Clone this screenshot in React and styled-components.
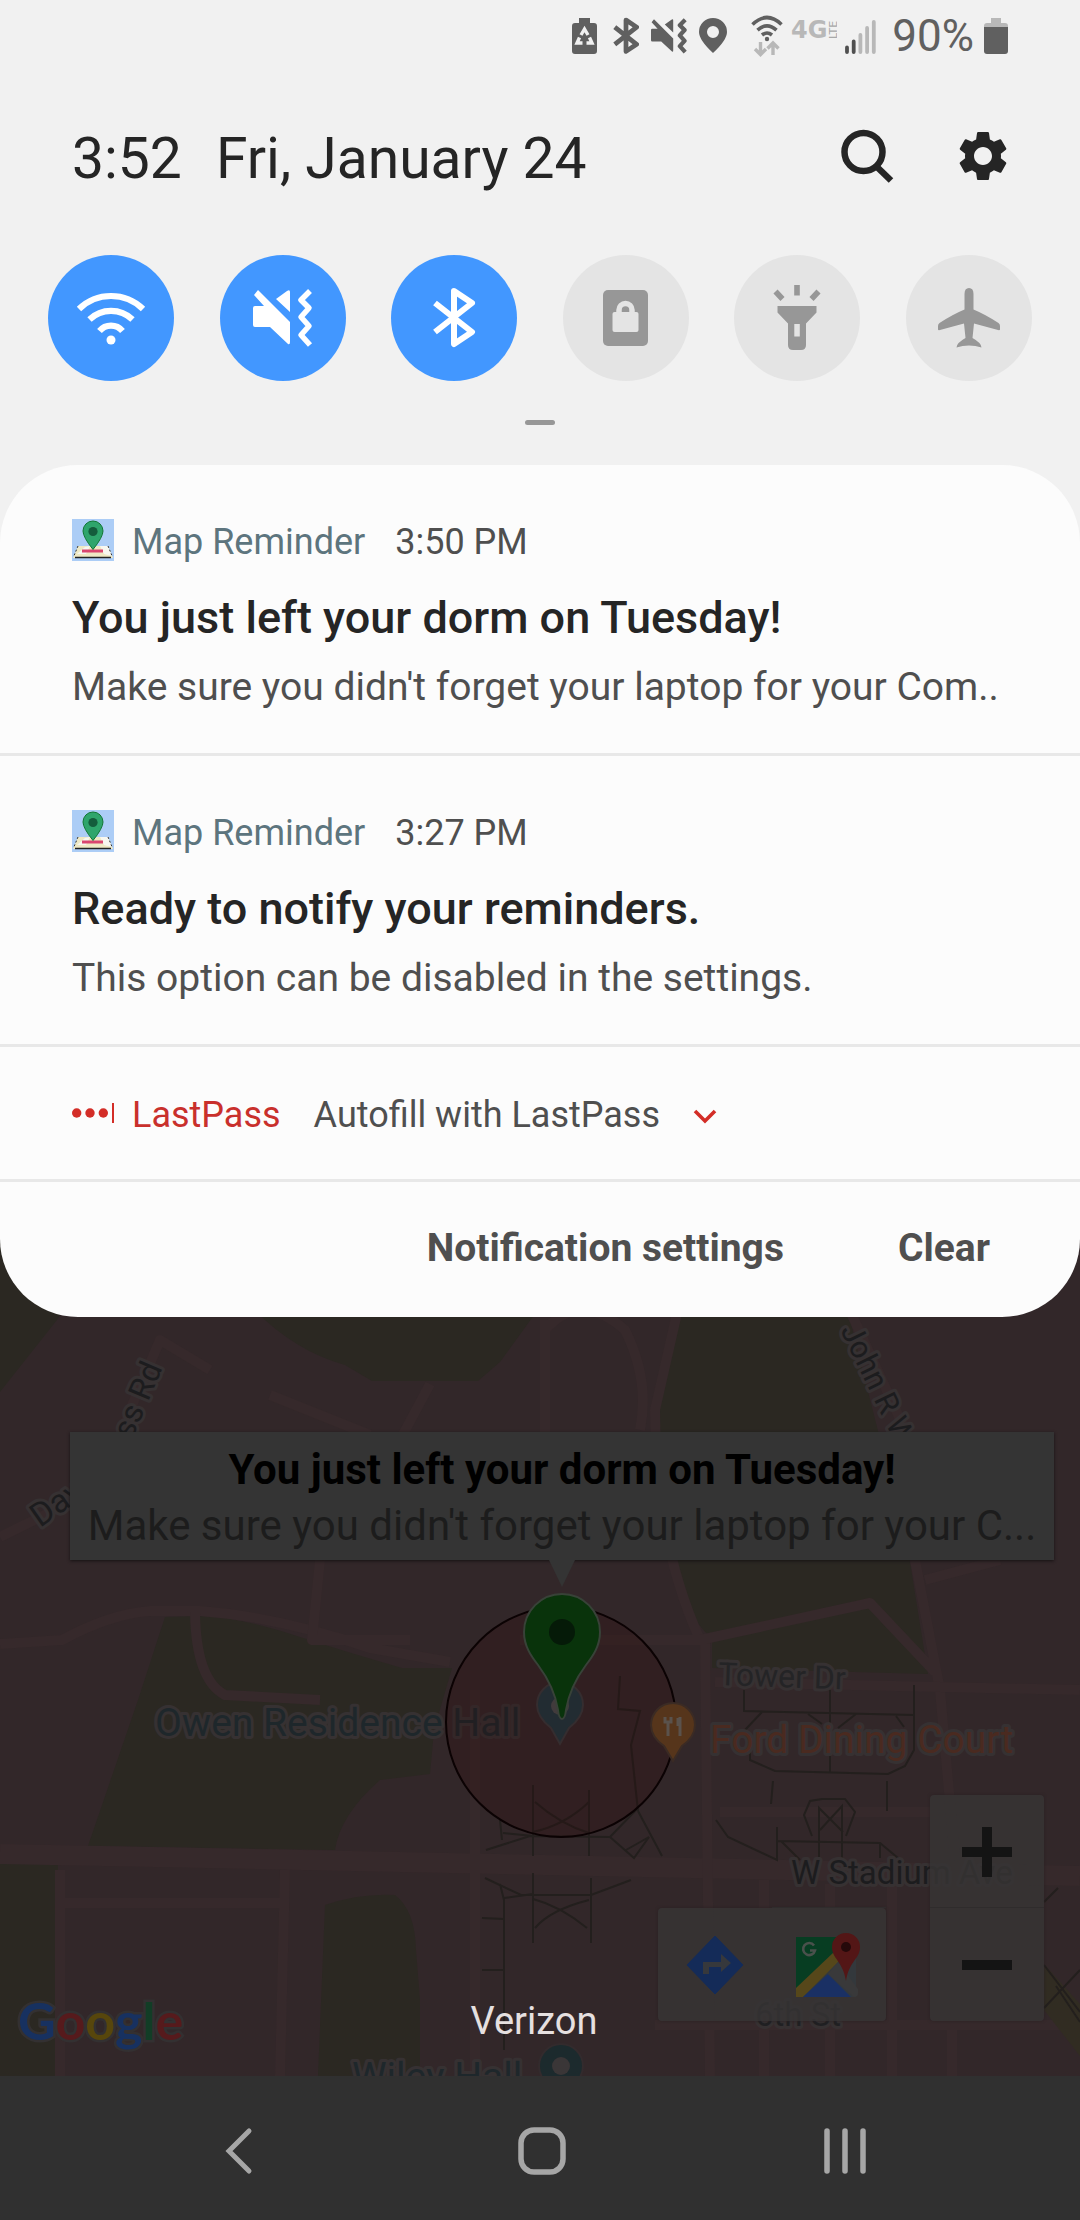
import React from "react";
import styled, { createGlobalStyle } from "styled-components";
import { MdSettings } from "react-icons/md";

const GlobalStyle = createGlobalStyle`
  *, *::before, *::after { box-sizing: border-box; }
  body { margin: 0; background: #303030; }
  h1, h2, p, time { margin: 0; }
  svg { display: block; flex: none; }
`;

const Screen = styled.div`
  display: flex;
  flex-direction: column;
  min-height: 100vh;
  font-family: Roboto, "Noto Sans", sans-serif;
  color: #252525;
`;

const PlainButton = styled.button`
  display: flex;
  align-items: center;
  justify-content: center;
  padding: 0;
  border: 0;
  background: none;
  color: inherit;
  font: inherit;
  cursor: pointer;
`;

/* ---------- quick panel ---------- */

const QuickPanel = styled.header`
  padding-bottom: 120px;
  background: #f1f1f1;
`;

const StatusBar = styled.div`
  display: flex;
  justify-content: flex-end;
  align-items: center;
  gap: 16px;
  height: 72px;
  padding: 0 72px;
  color: #606060;
  font-size: 44px;
  line-height: 48px;
`;

const StatusGroup = styled.div`
  display: flex;
  align-items: center;
  gap: ${(p) => p.$gap}px;
`;

const AlertIcons = styled(StatusGroup)`
  padding-right: 8px;
`;

const ClockRow = styled.div`
  display: flex;
  align-items: center;
  justify-content: space-between;
  height: 168px;
  padding: 0 72px;
`;

const Clock = styled.h1`
  display: flex;
  gap: 34px;
  padding-top: 6px;
  font-size: 57px;
  line-height: 68px;
  font-weight: 400;
  white-space: nowrap;
`;

const ClockActions = styled.div`
  display: flex;
  align-items: center;
  gap: 63px;
`;

const GearIcon = styled(MdSettings)`
  width: 50px;
  height: 60px;
`;

const Toggles = styled.div`
  display: flex;
  justify-content: space-between;
  padding: 15px 48px 0;
`;

const Toggle = styled(PlainButton)`
  width: 126px;
  height: 126px;
  border-radius: 50%;
  background: ${(p) => (p.$on ? "#4297ff" : "#e4e4e4")};
  color: ${(p) => (p.$on ? "#ffffff" : "#979797")};
`;

const Handle = styled.div`
  width: 30px;
  height: 5px;
  margin: 39px auto 0;
  border-radius: 3px;
  background: #979797;
`;

/* ---------- notifications ---------- */

const Panel = styled.main`
  position: relative;
  z-index: 2;
  margin-top: -80px;
  border-radius: 78px;
  background: #fcfcfc;
  overflow: hidden;
`;

const Card = styled.article`
  padding: 54px 72px 42px;
  border-bottom: 3px solid #e8e8e8;
`;

const CardHead = styled.div`
  display: flex;
  align-items: center;
  gap: ${(p) => (p.$compact ? 33 : 30)}px;
  font-size: 36px;
  line-height: 46px;
  color: #4f4f4f;
`;

const AppName = styled.span`
  display: flex;
  align-items: flex-start;
  gap: 18px;
  color: ${(p) => p.$color};
`;

const CardTitle = styled.h2`
  margin-top: 26px;
  font-size: 45px;
  line-height: 54px;
  font-weight: 500;
`;

const CardBody = styled.p`
  margin-top: 18px;
  font-size: 39px;
  line-height: 48px;
  color: #4f4f4f;
  white-space: nowrap;
`;

const CompactCard = styled(Card)`
  padding: 45px 72px 41px;
`;

const PanelFooter = styled.footer`
  display: flex;
  align-items: center;
  justify-content: flex-end;
  gap: 114px;
  height: 135px;
  padding: 0 90px 4px;
`;

const FooterButton = styled(PlainButton)`
  font-size: 39px;
  line-height: 48px;
  font-weight: 700;
  color: #4f4f4f;
`;

/* ---------- map ---------- */

const MapArea = styled.section`
  position: relative;
  z-index: 1;
  flex: 1 0 847px;
  margin-top: -88px;
  background: #322729;
  overflow: hidden;
`;

const MapCanvas = styled.svg`
  position: absolute;
  inset: 0;
  width: 100%;
  height: 100%;
`;

const InfoWindow = styled.div`
  position: absolute;
  top: 203px;
  left: 70px;
  right: 26px;
  padding: 12px 0 4px;
  background: #343434;
  box-shadow: 0 1px 3px #161213;
  text-align: center;
  color: #1c1c1c;
  white-space: nowrap;

  &::after {
    content: "";
    position: absolute;
    top: 100%;
    left: 50%;
    margin-left: -13px;
    border: 13px solid transparent;
    border-top: 27px solid #343434;
    border-bottom: 0;
  }
`;

const InfoTitle = styled.h2`
  font-size: 42px;
  line-height: 52px;
  font-weight: 700;
  color: #000000;
`;

const InfoText = styled.p`
  font-size: 42px;
  line-height: 60px;
`;

const MapControls = styled.div`
  position: absolute;
  right: 36px;
  bottom: 55px;
  display: flex;
  align-items: flex-end;
  gap: 44px;
`;

const ControlGroup = styled.div`
  display: flex;
  flex-direction: ${(p) => (p.$column ? "column" : "row")};
  border-radius: 4px;
  background: rgba(55, 53, 53, 0.82);
  box-shadow: 0 0 3px #2a2122;
`;

const ControlButton = styled(PlainButton)`
  width: 114px;
  height: 113px;

  & + & {
    box-shadow: ${(p) => (p.$column ? "0 -1px 0 #2f2c2c" : "-1px 0 0 #2f2c2c")};
  }
`;

const Carrier = styled.p`
  position: absolute;
  bottom: 31px;
  left: 0;
  right: 12px;
  text-align: center;
  font-size: 38px;
  line-height: 48px;
  color: #e6e0e0;
`;

/* ---------- navigation bar ---------- */

const NavBar = styled.nav`
  position: relative;
  z-index: 2;
  display: grid;
  grid-template-columns: repeat(3, 1fr);
  height: 144px;
  padding: 6px 84px 0 88px;
  background: #303030;
  color: #a6a6a6;
`;

/* ---------- icons ---------- */

const PowerSavingIcon = () => (
  <svg width="29" height="38" viewBox="0 0 29 38" aria-hidden="true">
    <path fill="#606060" d="M7 1h11v5h4q3 0 3 3v25q0 3-3 3H3q-3 0-3-3V9q0-3 3-3h4z" />
    <g fill="none" stroke="#f1f1f1" strokeWidth="3.400">
      <path d="M9 18l3.500-6 3.500 6M7.500 20.500L5 26h5.500M17.500 20.500L20 26h-5.500" />
    </g>
  </svg>
);

const BluetoothIcon = ({ w, h, stroke }) => (
  <svg width={w} height={h} viewBox="0 0 44 62" aria-hidden="true">
    <path
      d="M3 16L40 45L22 57V4L40 16L3 45"
      fill="none"
      stroke="currentColor"
      strokeWidth={stroke}
      strokeLinejoin="round"
    />
  </svg>
);

const MuteIcon = ({ w, h, stroke }) => (
  <svg width={w} height={h} viewBox="0 0 60 60" aria-hidden="true">
    <path
      fill="currentColor"
      d="M2 18h9L1 7l4-5 32 32v20q0 3-2 2L17 39H2q-2 0-2-2V20q0-2 2-2zM23 11l11-8q3-2 3 1v20z"
    />
    <path
      fill="none"
      stroke="currentColor"
      strokeWidth={stroke}
      strokeLinejoin="round"
      d="M57 3l-9 9 8 8-8 9 8 9-8 9 9 10"
    />
  </svg>
);

const LocationIcon = () => (
  <svg width="28" height="36" viewBox="0 0 28 36" aria-hidden="true">
    <path
      fill="#606060"
      fillRule="evenodd"
      d="M14 0a14 14 0 0 1 14 14q0 8-14 21Q0 22 0 14A14 14 0 0 1 14 0zm0 8a6 6 0 1 0 0 12 6 6 0 0 0 0-12z"
    />
  </svg>
);

const WifiStatusIcon = () => (
  <svg width="32" height="42" viewBox="0 0 32 42" aria-hidden="true">
    <g fill="none" stroke="#606060" strokeWidth="3.600">
      <path d="M1.500 9.500Q16-4.500 30.500 9.500M6.500 15.200Q16 6.500 25.500 15.200M11 20Q16 16 21 20" />
    </g>
    <circle cx="16" cy="24" r="2.200" fill="#606060" />
    <g fill="none" stroke="#b8b8b8" strokeWidth="3.400">
      <path d="M9.500 27v12M4 34l5.500 5.500L15 34M22 40V28M16.500 33.500L22 28l5.500 5.500" />
    </g>
  </svg>
);

const NetworkIcon = () => (
  <svg width="46" height="36" viewBox="0 0 46 36" role="img" aria-label="4G LTE">
    <text x="0" y="20" fontFamily="DejaVu Sans, sans-serif" fontWeight="700" fontSize="24" fill="#b8b8b8">
      4G
    </text>
    <text
      transform="translate(46 21) rotate(-90)"
      fontFamily="DejaVu Sans, sans-serif"
      fontSize="11"
      fill="#a8a8a8"
    >
      LTE
    </text>
  </svg>
);

const SignalIcon = () => (
  <svg width="31" height="35" viewBox="0 0 31 35" aria-hidden="true">
    <g strokeWidth="3.800" strokeLinecap="round">
      <path stroke="#505050" d="M2 28.500V33M8.700 22.500V33" />
      <path stroke="#b8b8b8" d="M15.400 16V33M22.100 9V33M28.800 3V33" />
    </g>
  </svg>
);

const BatteryIcon = () => (
  <svg width="24" height="38" viewBox="0 0 24 38" aria-hidden="true">
    <path fill="#b8b8b8" d="M7 1h10v5h4q3 0 3 3v1H0V9q0-3 3-3h4z" />
    <path fill="#606060" d="M0 10h24v24q0 3-3 3H3q-3 0-3-3z" />
  </svg>
);

const SearchIcon = () => (
  <svg width="54" height="54" viewBox="0 0 54 54" aria-hidden="true">
    <g fill="none" stroke="#252525">
      <circle cx="22.500" cy="23" r="19" strokeWidth="6.500" />
      <path d="M35 37L50 51.500" strokeWidth="6.500" />
    </g>
  </svg>
);

const WifiIcon = () => (
  <svg width="70" height="60" viewBox="0 0 70 60" aria-hidden="true">
    <g fill="none" stroke="currentColor" strokeWidth="6.200">
      <path d="M3 21A45.900 45.900 0 0 1 67 21M13.500 31.500A31 31 0 0 1 56.500 31.500M23.500 43A15 15 0 0 1 46.500 43" />
    </g>
    <circle cx="35" cy="52" r="4.500" fill="currentColor" />
  </svg>
);

const LockIcon = () => (
  <svg width="45" height="56" viewBox="0 0 45 56" aria-hidden="true">
    <rect width="45" height="56" rx="5" fill="currentColor" />
    <rect x="9.500" y="22" width="26" height="20" rx="2" fill="#e4e4e4" />
    <path d="M16 23v-3a6.500 6.500 0 0 1 13 0v3" fill="none" stroke="#e4e4e4" strokeWidth="5.500" />
  </svg>
);

const FlashlightIcon = () => (
  <svg width="48" height="66" viewBox="0 0 48 66" aria-hidden="true">
    <path
      fill="currentColor"
      fillRule="evenodd"
      d="M4.500 21h39v6.500l-10.500 11V60q0 5-5 5h-8q-5 0-5-5V38.500L4.500 27.500zM21.300 39v12.500h5.500V39z"
    />
    <path d="M24 0v10.500M2.500 6.500l7 7.500M45.500 6.500l-7 7.500" stroke="currentColor" strokeWidth="5.600" />
  </svg>
);

const AirplaneIcon = () => (
  <svg width="62" height="60" viewBox="0 0 62 60" aria-hidden="true">
    <path
      fill="currentColor"
      d="M31 0q4.500 0 4.500 6v15.500q12 5 25 13.500 1.500 1 1.500 3v3.500q0 1-2 .6L36 35.500l-1.500 14.500Q43.500 55 43.500 59.500q-6-2-12.500-2-6.500 0-12.500 2Q18.500 55 27.500 50L26 35.500 2 42.100q-2 .4-2-.6V38q0-2 1.500-3 13-8.500 25-13.500V6Q26.500 0 31 0z"
    />
  </svg>
);

const MapReminderIcon = () => (
  <svg width="42" height="42" viewBox="0 0 42 42" aria-hidden="true">
    <rect width="42" height="42" fill="#accdf6" />
    <path d="M6 27h30l5 12H1z" fill="#efe9c4" />
    <path d="M5 35l8-7 5-1-4 8zM28 27h8l4 10-8-2z" fill="#f7f7f0" />
    <path d="M3 38.500h36" stroke="#222" strokeWidth="1.500" />
    <path d="M6 27L1.500 38M36 27l4.500 11" stroke="#333" strokeWidth="1" strokeDasharray="2 2" />
    <path d="M10 32h21" stroke="#d9466f" strokeWidth="3" />
    <path
      d="M21 2a10 10 0 0 1 10 10q0 6-10 18.500Q11 18 11 12A10 10 0 0 1 21 2z"
      fill="#2fa56c"
      stroke="#173"
      strokeWidth="1"
    />
    <circle cx="21" cy="12.500" r="4.600" fill="#145c3c" />
  </svg>
);

const LastPassIcon = () => (
  <svg width="42" height="42" viewBox="0 0 42 42" aria-hidden="true">
    <g fill="#d32d27">
      <circle cx="4.700" cy="21" r="4.700" />
      <circle cx="18" cy="21" r="4.700" />
      <circle cx="31.300" cy="21" r="4.700" />
      <rect x="40" y="11" width="2" height="20" />
    </g>
  </svg>
);

const ChevronIcon = () => (
  <svg width="24" height="18" viewBox="0 -3 24 18" aria-hidden="true">
    <path d="M2 2l10 10L22 2" fill="none" stroke="#d32d27" strokeWidth="3.600" />
  </svg>
);

const DirectionsIcon = () => (
  <svg width="58" height="60" viewBox="0 0 58 60" aria-hidden="true">
    <path d="M29 1L57 30 29 59 1 30z" fill="#142b58" stroke="#142b58" strokeLinejoin="round" />
    <path d="M17 39V27h18v-8l10 9-10 9v-5H23v7z" fill="#36383c" />
  </svg>
);

const GoogleMapsIcon = () => (
  <svg width="66" height="66" viewBox="0 0 66 66" aria-hidden="true">
    <path d="M0 5h60v60H0z" fill="#33383c" />
    <path d="M0 5h48v10L0 61z" fill="#073d22" />
    <path d="M0 65v-9l38-36 7 7L7 65z" fill="#56471a" />
    <path d="M7 65l25-23 23 23z" fill="#1a3064" />
    <path d="M42 30l20 27v4q0 4-4 4L32 42z" fill="#39393a" />
    <path d="M50 1a14 14 0 0 1 14 14c0 12-11 14-14 34-3-20-14-22-14-34A14 14 0 0 1 50 1z" fill="#531616" />
    <circle cx="50" cy="15" r="5" fill="#25090a" />
    <path d="M18 13.500a6 6 0 1 0 1 5h-5" fill="none" stroke="#4a514c" strokeWidth="2.600" />
  </svg>
);

const PlusIcon = () => (
  <svg width="50" height="50" viewBox="0 0 50 50" aria-hidden="true">
    <path d="M0 25h50M25 0v50" stroke="#141414" strokeWidth="10" />
  </svg>
);

const MinusIcon = () => (
  <svg width="50" height="50" viewBox="0 0 50 50" aria-hidden="true">
    <path d="M0 25h50" stroke="#141414" strokeWidth="10" />
  </svg>
);

const BackIcon = () => (
  <svg width="30" height="48" viewBox="0 0 30 48" aria-hidden="true">
    <path d="M25 4L5 24l20 20" fill="none" stroke="currentColor" strokeWidth="5" strokeLinecap="round" />
  </svg>
);

const HomeIcon = () => (
  <svg width="48" height="48" viewBox="0 0 48 48" aria-hidden="true">
    <rect x="3" y="3" width="42" height="42" rx="13" fill="none" stroke="currentColor" strokeWidth="5.500" />
  </svg>
);

const RecentsIcon = () => (
  <svg width="42" height="46" viewBox="0 0 42 46" aria-hidden="true">
    <path d="M3 3v40M21 3v40M39 3v40" stroke="currentColor" strokeWidth="5.500" strokeLinecap="round" />
  </svg>
);

/* ---------- map drawing ---------- */

const LABELS = [
  { text: "Owen Residence Hall", x: 155, y: 1736, size: 39, fill: "#1e272b" },
  { text: "Tower Dr", x: 718, y: 1685, size: 32, fill: "#242426", rotate: 2 },
  { text: "Ford Dining Court", x: 710, y: 1753, size: 39, fill: "#4a2a20" },
  { text: "W Stadium Ave", x: 791, y: 1884, size: 33, fill: "#1c1c1e" },
  { text: "6th St", x: 755, y: 2026, size: 33, fill: "#202022" },
  { text: "Wiley Hall", x: 352, y: 2090, size: 39, fill: "#1e272b" },
  { text: "Dav", x: 40, y: 1528, size: 33, fill: "#1c1c1e", rotate: -35 },
  { text: "ss Rd", x: 132, y: 1440, size: 32, fill: "#1c1c1e", rotate: -67 },
  { text: "John R W", x: 840, y: 1330, size: 31, fill: "#1c1c1e", rotate: 64 },
];

const MapLabel = ({ text, x, y, size, fill, rotate = 0 }) => (
  <text
    transform={`translate(${x} ${y}) rotate(${rotate})`}
    fontSize={size}
    fill={fill}
    stroke="#363132"
    strokeWidth="6"
    strokeLinejoin="round"
    paintOrder="stroke"
  >
    {text}
  </text>
);

const CampusMap = () => (
  <MapCanvas viewBox="0 1229 1080 847" preserveAspectRatio="xMidYMin slice" fontFamily="Roboto, sans-serif">
    <g fill="#2b2822">
      <path d="M0 1229H110L57 1320 0 1392z" />
      <path d="M245 1300Q290 1350 345 1365L372 1381H478L500 1362 545 1300z" />
      <path d="M165 1617L138 1700 88 1846 335 1850Q340 1815 380 1780L430 1774 434 1730 452 1668H402Q340 1650 300 1637 240 1617 200 1616z" />
      <path d="M0 1862H58V2076H0z" />
      <path d="M325 1905Q360 1893 395 1895 415 1910 416 1950L420 2000V2076H318z" />
      <path d="M680 1300L664 1370 655 1420Q665 1560 695 1620L712 1640V1668L928 1674 908 1550 845 1300z" />
    </g>
    <g fill="none" stroke="#36292b" strokeWidth="10" strokeLinejoin="round">
      <path d="M0 1854L400 1862 1080 1876" strokeWidth="20" />
      <path d="M0 1644L62 1640Q110 1614 150 1611H200Q280 1617 370 1648L450 1662" />
      <path d="M195 1612Q196 1680 225 1695L320 1700" />
      <path d="M0 1537L75 1500Q110 1470 130 1410L160 1340 210 1370" />
      <path d="M270 1395L370 1435M430 1384L400 1440M545 1330Q580 1290 625 1330 650 1380 640 1430" />
      <path d="M545 1320V1440M680 1300L655 1410Q655 1540 700 1640M320 1560L312 1640 410 1640" />
      <path d="M60 1870V2076M64 1903H284M285 1870L280 2076M475 1690V2076" />
      <path d="M705 1640L710 2076M764 1880V2076M830 1884V2076M892 1884V2076M952 1884V2076" />
      <path d="M700 1640L870 1603 935 1672M845 1300L905 1430 915 1560 940 1690 955 1860" />
      <path d="M520 1640H706M715 1682L1080 1690M925 1580L1000 1560M720 1812H930M655 2025H1080" />
    </g>
    <path d="M1044 1964L1080 2004V2056L1044 2010z" fill="#312c22" />

    <g fill="none" stroke="#231f1d" strokeWidth="2">
      <path d="M533 1785V1856M589 1790V1856M535 1802Q560 1824 589 1833M589 1802Q565 1825 533 1832" />
      <path d="M500 1820L502 1840M486 1850L530 1836 610 1837 638 1808M610 1837L634 1858 649 1837 626 1850M638 1811L662 1856M503 1833L533 1836" />
      <path d="M620 1676L618 1709 640 1711 631 1745 638 1811" />
      <path d="M533 1873V1943M591 1878V1943M485 1878L521 1895H591L631 1880M500 1884L504 1900V2050M504 1898L533 1894M482 1918L504 1919M482 1970H504" />
      <path d="M533 1899Q560 1906 587 1928M589 1900Q550 1910 535 1928" />
      <path d="M744 1690V1711L914 1715M914 1685V1750L905 1766 888 1774 775 1771 750 1760V1740M830 1690V1772M762 1712L745 1730M808 1714L822 1724M856 1714L838 1728M896 1716L904 1727" />
      <path d="M773 1781L771 1804M887 1781V1811M812 1836L804 1815 810 1801 822 1799H845L855 1812 846 1836M819 1858V1808L843 1832M842 1858V1806L820 1830" />
      <path d="M716 1820L728 1837 777 1860V1827M777 1841L880 1843 904 1863M781 1841L800 1860M880 1843V1858" />
      <path d="M1058 1888L1044 1902M1044 1965L1080 2012M1044 2008L1080 1970M1056 1986L1080 2022" />
    </g>

    {LABELS.map((label) => (
      <MapLabel key={label.text} {...label} />
    ))}

    <circle cx="561" cy="1722" r="115" fill="#300a08" fillOpacity="0.24" stroke="#0b0203" strokeWidth="2" />

    <path
      d="M560 1682a23 23 0 0 1 23 23q0 12-14 23l-9 16-9-16q-14-11-14-23a23 23 0 0 1 23-23z"
      fill="#222c32"
      stroke="#352d2f"
      strokeWidth="2"
    />
    <circle cx="560" cy="1706" r="9" fill="#413b3c" />
    <path
      d="M562 1594a38 38 0 0 1 38 38c0 14-7 24-14 33-9 12-17 26-20 45q-1 9-4 9-3 0-4-9c-3-19-11-33-20-45-7-9-14-19-14-33a38 38 0 0 1 38-38z"
      fill="#09330b"
      stroke="#384238"
      strokeWidth="2"
    />
    <circle cx="562" cy="1632" r="13" fill="#051a08" />

    <path
      d="M673 1703a22 22 0 0 1 22 22q0 12-13 21l-9 15-9-15q-13-9-13-21a22 22 0 0 1 22-22z"
      fill="#56351b"
      stroke="#3b2b24"
      strokeWidth="2"
    />
    <g fill="none" stroke="#5a524c" strokeWidth="3">
      <path d="M668 1722V1736M665 1717V1722H671V1717M680 1717V1736M678 1718V1726" />
    </g>
    <circle cx="561" cy="2066" r="22" fill="#1c2a2d" stroke="#332b2d" strokeWidth="2" />
    <circle cx="561" cy="2066" r="9" fill="#3a3637" />

    <text
      x="18"
      y="2040"
      fontFamily="Lato, sans-serif"
      fontSize="52"
      fontWeight="700"
      stroke="#333031"
      strokeWidth="5"
      paintOrder="stroke"
    >
      <tspan fill="#173160">G</tspan>
      <tspan fill="#561a1c">o</tspan>
      <tspan fill="#57460c">o</tspan>
      <tspan fill="#173160">g</tspan>
      <tspan fill="#123d26">l</tspan>
      <tspan fill="#561a1c">e</tspan>
    </text>
  </MapCanvas>
);

const NOTIFICATIONS = [
  {
    time: "3:50 PM",
    title: "You just left your dorm on Tuesday!",
    body: "Make sure you didn't forget your laptop for your Com..",
  },
  {
    time: "3:27 PM",
    title: "Ready to notify your reminders.",
    body: "This option can be disabled in the settings.",
  },
];

const TOGGLES = [
  { name: "Wi-Fi", on: true, icon: <WifiIcon /> },
  { name: "Vibrate", on: true, icon: <MuteIcon w={60} h={60} stroke={5.5} /> },
  { name: "Bluetooth", on: true, icon: <BluetoothIcon w={44} h={62} stroke={6} /> },
  { name: "Screen lock", on: false, icon: <LockIcon /> },
  { name: "Flashlight", on: false, icon: <FlashlightIcon /> },
  { name: "Airplane mode", on: false, icon: <AirplaneIcon /> },
];

export default function App() {
  return (
    <Screen>
      <GlobalStyle />
      <QuickPanel>
        <StatusBar>
          <AlertIcons $gap={12}>
            <PowerSavingIcon />
            <BluetoothIcon w={26} h={38} stroke={8} />
            <MuteIcon w={36} h={38} stroke={7} />
            <LocationIcon />
          </AlertIcons>
          <StatusGroup $gap={8}>
            <WifiStatusIcon />
            <NetworkIcon />
            <SignalIcon />
          </StatusGroup>
          <StatusGroup $gap={10}>
            <span>90%</span>
            <BatteryIcon />
          </StatusGroup>
        </StatusBar>
        <ClockRow>
          <Clock>
            <span>3:52</span>
            <span>Fri, January 24</span>
          </Clock>
          <ClockActions>
            <PlainButton type="button" aria-label="Search">
              <SearchIcon />
            </PlainButton>
            <PlainButton type="button" aria-label="Settings">
              <GearIcon viewBox="2 0 20 24" />
            </PlainButton>
          </ClockActions>
        </ClockRow>
        <Toggles>
          {TOGGLES.map((t) => (
            <Toggle key={t.name} type="button" aria-label={t.name} aria-pressed={t.on} $on={t.on}>
              {t.icon}
            </Toggle>
          ))}
        </Toggles>
        <Handle />
      </QuickPanel>

      <Panel>
        {NOTIFICATIONS.map((n) => (
          <Card key={n.time}>
            <CardHead>
              <AppName $color="#5d757e">
                <MapReminderIcon />
                Map Reminder
              </AppName>
              <time>{n.time}</time>
            </CardHead>
            <CardTitle>{n.title}</CardTitle>
            <CardBody>{n.body}</CardBody>
          </Card>
        ))}
        <CompactCard>
          <CardHead $compact>
            <AppName $color="#c9302c">
              <LastPassIcon />
              LastPass
            </AppName>
            <span>Autofill with LastPass</span>
            <PlainButton type="button" aria-label="Expand">
              <ChevronIcon />
            </PlainButton>
          </CardHead>
        </CompactCard>
        <PanelFooter>
          <FooterButton type="button">Notification settings</FooterButton>
          <FooterButton type="button">Clear</FooterButton>
        </PanelFooter>
      </Panel>

      <MapArea>
        <CampusMap />
        <InfoWindow>
          <InfoTitle>You just left your dorm on Tuesday!</InfoTitle>
          <InfoText>Make sure you didn't forget your laptop for your C...</InfoText>
        </InfoWindow>
        <MapControls>
          <ControlGroup>
            <ControlButton type="button" aria-label="Directions">
              <DirectionsIcon />
            </ControlButton>
            <ControlButton type="button" aria-label="Open in Google Maps">
              <GoogleMapsIcon />
            </ControlButton>
          </ControlGroup>
          <ControlGroup $column>
            <ControlButton type="button" aria-label="Zoom in" $column>
              <PlusIcon />
            </ControlButton>
            <ControlButton type="button" aria-label="Zoom out" $column>
              <MinusIcon />
            </ControlButton>
          </ControlGroup>
        </MapControls>
        <Carrier>Verizon</Carrier>
      </MapArea>

      <NavBar>
        <PlainButton type="button" aria-label="Back">
          <BackIcon />
        </PlainButton>
        <PlainButton type="button" aria-label="Home">
          <HomeIcon />
        </PlainButton>
        <PlainButton type="button" aria-label="Recent apps">
          <RecentsIcon />
        </PlainButton>
      </NavBar>
    </Screen>
  );
}
